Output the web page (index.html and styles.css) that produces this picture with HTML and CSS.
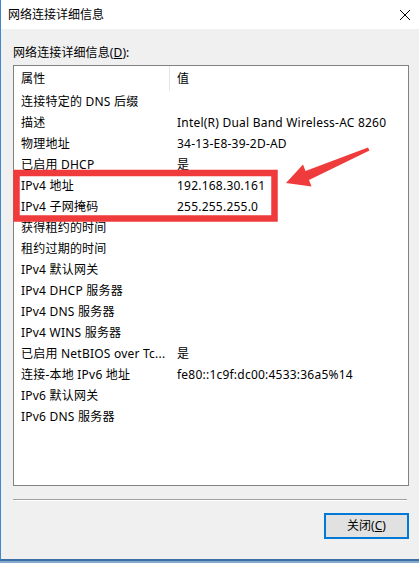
FILE: index.html
```html
<!DOCTYPE html>
<html lang="zh-CN">
<head>
<meta charset="utf-8">
<title>网络连接详细信息</title>
<link rel="stylesheet" href="styles.css">
</head>
<body>
<div class="screen">
  <div class="window">
    <div class="titlebar">
      <span class="title">网络连接详细信息</span>
      <svg class="close" width="12" height="12" viewBox="0 0 12 12"><path d="M1 1L11 11M11 1L1 11" stroke="#000" stroke-width="1" fill="none"/></svg>
    </div>
    <div class="content">
      <div class="label">网络连接详细信息(<u>D</u>):</div>
      <div class="listbox">
        <div class="row header"><div class="c1">属性</div><div class="c2">值</div></div>
        <div class="row"><div class="c1">连接特定的 DNS 后缀</div><div class="c2"></div></div>
        <div class="row"><div class="c1">描述</div><div class="c2">Intel(R) Dual Band Wireless-AC 8260</div></div>
        <div class="row"><div class="c1">物理地址</div><div class="c2">34-13-E8-39-2D-AD</div></div>
        <div class="row"><div class="c1">已启用 DHCP</div><div class="c2">是</div></div>
        <div class="row"><div class="c1">IPv4 地址</div><div class="c2">192.168.30.161</div></div>
        <div class="row"><div class="c1">IPv4 子网掩码</div><div class="c2">255.255.255.0</div></div>
        <div class="row"><div class="c1">获得租约的时间</div><div class="c2"></div></div>
        <div class="row"><div class="c1">租约过期的时间</div><div class="c2"></div></div>
        <div class="row"><div class="c1">IPv4 默认网关</div><div class="c2"></div></div>
        <div class="row"><div class="c1">IPv4 DHCP 服务器</div><div class="c2"></div></div>
        <div class="row"><div class="c1">IPv4 DNS 服务器</div><div class="c2"></div></div>
        <div class="row"><div class="c1">IPv4 WINS 服务器</div><div class="c2"></div></div>
        <div class="row"><div class="c1">已启用 NetBIOS over Tc...</div><div class="c2">是</div></div>
        <div class="row"><div class="c1">连接-本地 IPv6 地址</div><div class="c2">fe80::1c9f:dc00:4533:36a5%14</div></div>
        <div class="row"><div class="c1">IPv6 默认网关</div><div class="c2"></div></div>
        <div class="row"><div class="c1">IPv6 DNS 服务器</div><div class="c2"></div></div>
      </div>
      <div class="sep"></div>
      <div class="actions"><button class="btn">关闭(<u>C</u>)</button></div>
    </div>
  </div>
  <svg class="annot" width="419" height="563" viewBox="0 0 419 563">
    <rect x="16.5" y="173" width="258" height="45.5" fill="none" stroke="#ef3b3b" stroke-width="6.5"/>
    <polygon points="286,183 303,164.5 305.5,171 368,147.5 369.5,150.5 309,180 311.5,186.5" fill="#ef3b3b"/>
  </svg>
</div>
</body>
</html>
```
FILE: styles.css
```css
html, body {
  margin: 0;
  padding: 0;
}
body {
  width: 419px;
  height: 563px;
  background: #86a9cc;
  overflow: hidden;
  font-family: "Noto Sans", "Noto Sans CJK SC", sans-serif;
  font-size: 12px;
  color: #000;
}
.screen {
  position: relative;
  width: 419px;
  height: 563px;
}
.window {
  box-sizing: border-box;
  width: 419px;
  height: 561px;
  background: #f0f0f0;
  border-left: 1px solid #3f86cc;
  border-bottom: 2px solid #3b6fa5;
  display: flex;
  flex-direction: column;
}
.titlebar {
  height: 29px;
  background: #fff;
  display: flex;
  align-items: center;
  justify-content: space-between;
  padding: 1px 7px 0 7px;
  box-sizing: border-box;
}
.title {
  font-size: 12px;
  line-height: 16px;
}
.close {
  display: block;
  margin-right: 1px;
}
.content {
  padding: 16px 10px 0 12px;
  display: flex;
  flex-direction: column;
}
.label {
  line-height: 16px;
  height: 16px;
  letter-spacing: 0.1px;
}
.listbox {
  margin-top: 4px;
  box-sizing: border-box;
  height: 421px;
  background: #fff;
  border: 1px solid #828282;
}
.row {
  display: grid;
  grid-template-columns: 156px 1fr;
  box-sizing: border-box;
  height: 21px;
  padding-top: 1px;
  line-height: 21px;
  white-space: nowrap;
  letter-spacing: 0.22px;
}
.row .c1 {
  padding-left: 7px;
  overflow: hidden;
}
.row .c2 {
  padding-left: 7px;
}
.row.header {
  height: 24px;
  padding-top: 0;
  line-height: 24px;
}
.row.header .c1 {
  border-right: 1px solid #e5e5e5;
  line-height: 25px;
}
.row.header .c2 {
  line-height: 25px;
}
.sep {
  margin-top: 13px;
  margin-right: 2px;
  height: 1px;
  background: #a0a0a0;
  border-bottom: 1px solid #fff;
}
.actions {
  display: flex;
  justify-content: flex-end;
  margin-top: 12px;
}
.btn {
  box-sizing: border-box;
  width: 85px;
  height: 26px;
  background: #e1e1e1;
  border: 2px solid #0078d7;
  font-family: "Noto Sans", "Noto Sans CJK SC", sans-serif;
  font-size: 12px;
  color: #000;
  padding: 0;
  line-height: 20px;
}
.annot {
  position: absolute;
  left: 0;
  top: 0;
  pointer-events: none;
}
```
